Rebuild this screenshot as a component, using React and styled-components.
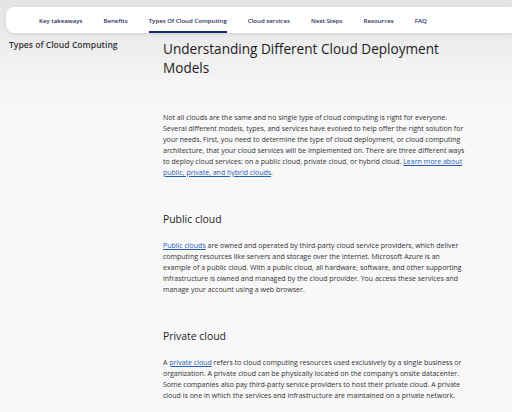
import React from "react";
import styled, { createGlobalStyle } from "styled-components";

const Global = createGlobalStyle`
  html, body { margin: 0; padding: 0; }
  body {
    background: linear-gradient(#e4e4e4 0px, #ececec 40px, #f5f5f5 80px, #f8f8f8 120px);
    background-color: #f8f8f8;
    font-family: "Open Sans", "Liberation Sans", sans-serif;
    color: #2b2b2b;
    width: 512px;
    height: 412px;
    overflow: hidden;
  }
`;

const Page = styled.div`
  padding-top: 7px;
`;

const NavBar = styled.nav`
  margin-left: 6px;
  height: 26px;
  background: #ffffff;
  border-radius: 8px 0 0 8px;
  box-shadow: 0 1px 4px rgba(0, 0, 0, 0.12);
  display: flex;
  align-items: stretch;
  padding-left: 33px;
  gap: 21px;
`;

const NavItem = styled.a`
  display: flex;
  align-items: center;
  padding-top: 1px;
  font-family: "Open Sans", sans-serif;
  font-size: 6.1px;
  font-weight: 600;
  color: #1f2d5a;
  text-decoration: none;
  white-space: nowrap;
  box-shadow: ${(p) => (p.$active ? "inset 0 -2px 0 #1b2a6b" : "none")};
`;

const Main = styled.div`
  display: grid;
  grid-template-columns: 154px 320px;
  padding-left: 9px;
  padding-top: 6px;
`;

const Side = styled.div`
  font-family: "Open Sans", sans-serif;
  font-size: 8.6px;
  font-weight: 600;
  color: #333;
  line-height: 13px;
`;

const Content = styled.div``;

const H1 = styled.h1`
  margin: 0;
  font-family: "Open Sans", sans-serif;
  font-weight: 400;
  font-size: 13.6px;
  line-height: 19px;
  color: #1b1b1b;
`;

const H2 = styled.h2`
  margin: 0;
  font-family: "Open Sans", sans-serif;
  font-weight: 400;
  font-size: 10.4px;
  line-height: 14px;
  color: #1b1b1b;
  margin-top: ${(p) => p.$top}px;
`;

const P = styled.p`
  margin: 0;
  margin-top: ${(p) => p.$top}px;
  font-family: "Open Sans", sans-serif;
  font-size: 7px;
  line-height: 11px;
  color: #333;
  white-space: nowrap;
`;

const Link = styled.a`
  color: #1f5fb5;
  text-decoration: underline;
`;

const navItems = [
  "Key takeaways",
  "Benefits",
  "Types Of Cloud Computing",
  "Cloud services",
  "Next Steps",
  "Resources",
  "FAQ",
];

export default function App() {
  return (
    <Page>
      <Global />
      <NavBar>
        {navItems.map((n) => (
          <NavItem key={n} $active={n === "Types Of Cloud Computing"}>
            {n}
          </NavItem>
        ))}
      </NavBar>
      <Main>
        <Side>Types of Cloud Computing</Side>
        <Content>
          <H1>
            Understanding Different Cloud Deployment
            <br />
            Models
          </H1>
          <P $top={35}>
            Not all clouds are the same and no single type of cloud computing is right for everyone.
            <br />
            Several different models, types, and services have evolved to help offer the right solution for
            <br />
            your needs. First, you need to determine the type of cloud deployment, or cloud computing
            <br />
            architecture, that your cloud services will be implemented on. There are three different ways
            <br />
            to deploy cloud services: on a public cloud, private cloud, or hybrid cloud.{" "}
            <Link>Learn more about</Link>
            <br />
            <Link>public, private, and hybrid clouds</Link>.
          </P>
          <H2 $top={34}>Public cloud</H2>
          <P $top={14}>
            <Link>Public clouds</Link> are owned and operated by third-party cloud service providers, which deliver
            <br />
            computing resources like servers and storage over the internet. Microsoft Azure is an
            <br />
            example of a public cloud. With a public cloud, all hardware, software, and other supporting
            <br />
            infrastructure is owned and managed by the cloud provider. You access these services and
            <br />
            manage your account using a web browser.
          </P>
          <H2 $top={34}>Private cloud</H2>
          <P $top={14}>
            A <Link>private cloud</Link> refers to cloud computing resources used exclusively by a single business or
            <br />
            organization. A private cloud can be physically located on the company's onsite datacenter.
            <br />
            Some companies also pay third-party service providers to host their private cloud. A private
            <br />
            cloud is one in which the services and infrastructure are maintained on a private network.
          </P>
        </Content>
      </Main>
    </Page>
  );
}
